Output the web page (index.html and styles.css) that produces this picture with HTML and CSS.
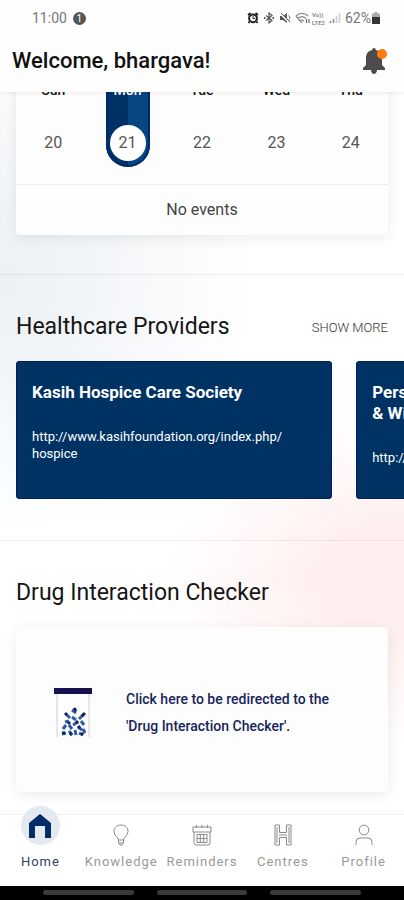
FILE: index.html
```html
<!DOCTYPE html>
<html lang="en">
<head>
<meta charset="utf-8">
<meta name="viewport" content="width=device-width, initial-scale=1">
<title>Home</title>
<link rel="stylesheet" href="styles.css">
</head>
<body>
<header class="top">
  <div class="status">
    <span class="clock">11:00</span>
    <span class="count">1</span>
    <div class="status-icons">
      <svg width="12" height="12" viewBox="0 0 12 12"><path d="M1 3 3.500 1M11 3 8.500 1M2.500 9.500 1.500 11M9.500 9.500l1 1.500" stroke="#222" stroke-width="1.800"/><circle cx="6" cy="6.300" r="3.900" fill="#fff" stroke="#222" stroke-width="2"/><path d="M6 4v2.500h2" fill="none" stroke="#222"/></svg>
      <svg width="12" height="12" viewBox="0 0 12 12" fill="none" stroke="#555" stroke-width="1.200"><path d="m3 3.500 6 5L6 11V1l3 2.500-6 5"/><path d="M1 6h1.500M9.500 6H11" stroke-width="2"/></svg>
      <svg width="12" height="12" viewBox="0 0 12 12"><path d="M1 4h3l4-3v10L4 8H1z" fill="#555"/><path d="m1 1 10 10" stroke="#fff" stroke-width="2"/><path d="m2 1 9 9M9.500 3.500c1.500 1 1.500 3 .5 4" fill="none" stroke="#555"/></svg>
      <svg width="16" height="12" viewBox="0 0 16 12" fill="none" stroke="#888" stroke-width="1.200"><path d="M1 4c3.500-3.500 8.500-3.500 12 0M3 6.500c2.500-2.300 5.500-2.300 8 0M5 9c1.300-1.200 2.700-1.200 4 0M1 4l6 7"/><path d="M11.500 7v4M14 11V7" stroke="#666"/></svg>
      <span class="volte"><span>Vo))</span><span>LTE2</span></span>
      <svg width="12" height="12" viewBox="0 0 12 12" stroke="#aaa" stroke-width="1.500"><path d="M1.500 9v2M4.500 7v4" stroke="#888"/><path d="M7.500 4v7M10.500 1v10" stroke="#ccc"/></svg>
      <span class="percent">62%</span>
      <svg width="8" height="12" viewBox="0 0 8 12"><path d="M2.500 0h3v1.500H8V12H0V1.500h2.500z" fill="#aaa"/><path d="M0 5h8v7H0z" fill="#333"/></svg>
    </div>
  </div>
  <div class="greeting">
    <h1>Welcome, bhargava!</h1>
    <button class="bell" aria-label="Notifications">
      <svg width="26" height="28" viewBox="0 0 26 28"><path d="M12 1c1.200 0 1.800.8 1.800 2 4.200.8 6.200 4 6.200 8v7l3 3v2H1v-2l3-3v-7c0-4 2-7.200 6.200-8 0-1.200.6-2 1.800-2z" fill="#4c4c4e"/><path d="M9 23h6c0 2.300-1.300 4-3 4s-3-1.700-3-4z" fill="#4c4c4e"/><circle cx="20" cy="7" r="5" fill="#ff7a0a"/></svg>
    </button>
  </div>
</header>

<main>
  <section class="events">
    <div class="calendar card">
      <div class="days">
        <button class="day"><b>Sun</b><span>20</span></button>
        <button class="day selected"><b>Mon</b><span>21</span></button>
        <button class="day"><b>Tue</b><span>22</span></button>
        <button class="day"><b>Wed</b><span>23</span></button>
        <button class="day"><b>Thu</b><span>24</span></button>
      </div>
      <p class="none">No events</p>
    </div>
  </section>

  <section class="block">
    <div class="block-head">
      <h2>Healthcare Providers</h2>
      <a class="more" href="#providers">SHOW MORE</a>
    </div>
    <div class="providers" id="providers">
      <article class="provider">
        <h3>Kasih Hospice Care Society</h3>
        <a href="#kasih">http://www.kasihfoundation.org/index.php/<br>hospice</a>
      </article>
      <article class="provider">
        <h3>Pers<br>&amp; Wi</h3>
        <a href="#pers">http://</a>
      </article>
    </div>
  </section>

  <section class="block">
    <div class="block-head"><h2>Drug Interaction Checker</h2></div>
    <a class="checker card" href="#checker">
      <svg width="38" height="50" viewBox="0 0 38 50">
        <path d="M3 6v43M35 6v43" stroke="#e6e6ea" stroke-width="2"/><path d="M4 6h30v43H4z" fill="#fff"/>
        <path d="M0 0h38v6H0z" fill="#17124d"/>
        <g stroke-width="3" fill="none">
          <path d="m18 22 4 3M12 26l4 4M30 26l-5 5M18 29l4 3M11 34l4-1M19 37l5-3M27 33l3 4M9 41l3-4M15 37l3 4M24 39l4 3M29 41l2 4M8 46l4-1M15 43l3 4M21 42l1 5M25 45l4 2" stroke="#2a5caa"/>
          <path d="m20 20 2 3M11 25l2 2M28 28l3-3M22 33l2 2M14 34l2 2M24 38l2 2M8 45h3M16 45l2 2M27 45l2 2" stroke="#15245c"/>
        </g>
      </svg>
      <span>Click here to be redirected to the<br>'Drug Interaction Checker'.</span>
    </a>
  </section>
</main>

<footer class="bottom">
  <nav>
    <a class="tab active" href="#home"><span class="icon">
      <svg width="22" height="24" viewBox="0 0 22 24"><path d="M11 0 22 9v15h-6V12H6v12H0V9z" fill="#052c66"/></svg></span>Home</a>
    <a class="tab" href="#knowledge"><span class="icon">
      <svg width="16" height="22" viewBox="0 0 16 22"><path d="M5.500 16c0-3-4.500-4-4.500-8.500C1 3.500 4 1 8 1s7 2.500 7 6.500c0 4.500-4.500 5.500-4.500 8.500zM5.500 16v3h5v-3M6 19.500 7 21h2l1-1.500"/></svg></span>Knowledge</a>
    <a class="tab" href="#reminders"><span class="icon">
      <svg width="22" height="22" viewBox="0 0 22 22"><path d="M2 3h18v5H2zM3 8v11q0 2 2 2h12q2 0 2-2V8M5.500 1v3M11 1v3M16.500 1v3M6 10.500h10v8H6zM6 14.500h10M9.300 10.500v8M12.600 10.500v8"/></svg></span>Reminders</a>
    <a class="tab" href="#centres"><span class="icon">
      <svg width="18" height="22" viewBox="0 0 18 22"><path d="M1 1h4.500v7.500h7V1H17v20h-4.500v-7.500h-7V21H1zM3 3v16M15 3v16M5 11h8"/></svg></span>Centres</a>
    <a class="tab" href="#profile"><span class="icon">
      <svg width="18" height="22" viewBox="0 0 18 22"><circle cx="9" cy="6" r="4.800"/><path d="M1 21v-3q0-4 4-4h8q4 0 4 4v3"/></svg></span>Profile</a>
  </nav>
  <div class="system"><i></i><i></i><i></i></div>
</footer>
</body>
</html>
```

FILE: styles.css
```css
* {
  box-sizing: border-box;
}

body {
  margin: 0;
  min-height: 100vh;
  display: flex;
  flex-direction: column;
  overflow-x: hidden;
  font-family: Roboto, "Liberation Sans", sans-serif;
  color: #151515;
  background:
    radial-gradient(ellipse 65% 260px at 0 280px, #ebf0f4, rgba(235, 240, 244, 0)),
    radial-gradient(ellipse 60% 170px at 100% 580px, #ffefee 30%, rgba(255, 239, 238, 0)),
    #fff;
}

h1, h2, h3, p {
  margin: 0;
}

button {
  border: 0;
  padding: 0;
  background: none;
  font: inherit;
  color: inherit;
}

a {
  color: inherit;
  text-decoration: none;
}

svg {
  display: block;
  flex: none;
}

/* Header */
.top {
  position: sticky;
  top: 0;
  z-index: 2;
  background: #fefefe;
  box-shadow: 0 1px 4px rgba(0, 0, 0, 0.08);
}

.status {
  height: 36px;
  padding: 0 24px 0 32px;
  display: flex;
  align-items: center;
  gap: 6px;
  color: #777;
  font-size: 14px;
}

.count {
  width: 13px;
  height: 13px;
  border-radius: 50%;
  background: #555;
  color: #fff;
  font-size: 10px;
  line-height: 13px;
  text-align: center;
}

.status-icons {
  margin-left: auto;
  display: flex;
  align-items: center;
  gap: 4px;
}

.status-icons svg:last-child {
  margin-left: -3px;
}

.volte {
  display: grid;
  gap: 1px;
  font-size: 6px;
  line-height: 7px;
  font-weight: 500;
  margin-left: -3px;
}

.greeting {
  height: 56px;
  padding: 0 16px 6px 12px;
  display: flex;
  align-items: center;
  justify-content: space-between;
}

h1 {
  font-size: 22px;
  font-weight: 500;
  line-height: 28px;
  color: #111;
}

/* Calendar */
.card {
  background: #fdfdfe;
  border-radius: 4px;
  box-shadow: 0 3px 14px rgba(0, 0, 0, 0.08);
}

.events {
  padding: 0 16px 39px;
  margin-top: -21px;
}

.days {
  display: grid;
  grid-template-columns: repeat(5, 1fr);
  justify-items: center;
  padding-bottom: 17px;
  border-bottom: 1px solid #ececee;
}

.day {
  width: 44px;
  padding: 9px 0 6px;
  display: flex;
  flex-direction: column;
  align-items: center;
  gap: 25px;
  border-radius: 0 0 22px 22px;
}

.day b {
  font-size: 14px;
  font-weight: 500;
  line-height: 20px;
}

.day span {
  width: 36px;
  height: 36px;
  border-radius: 50%;
  font-size: 16px;
  line-height: 36px;
  color: #555;
}

.selected {
  background: linear-gradient(90deg, #003166 50%, #084682 50%);
  box-shadow: inset 0 0 0 2px #00286c;
}

.selected b {
  color: #fff;
}

.selected span {
  background: #fff;
}

.none {
  padding: 15px 0;
  font-size: 16px;
  line-height: 20px;
  text-align: center;
  color: #444;
}

/* Sections */
.block {
  padding: 38px 16px 41px;
  border-top: 1px solid rgba(0, 0, 0, 0.06);
}

.block:last-child {
  padding-bottom: 22px;
}

.block-head {
  display: flex;
  align-items: center;
  justify-content: space-between;
  margin-bottom: 20px;
}

h2 {
  font-size: 23px;
  font-weight: 400;
  line-height: 28px;
}

.more {
  font-size: 13px;
  font-weight: 300;
  color: #333;
}

.providers {
  display: flex;
  gap: 24px;
  margin-right: -16px;
  padding-right: 16px;
  overflow: hidden;
}

.provider {
  flex: 0 0 85%;
  min-height: 138px;
  padding: 21px 16px;
  display: flex;
  flex-direction: column;
  gap: 25px;
  border-radius: 4px;
  box-shadow: inset 0 0 0 1px #00225a;
  background: #003263;
  color: #fff;
}

.provider h3 {
  font-size: 17px;
  font-weight: 700;
  line-height: 21px;
}

.provider a {
  font-size: 13px;
  line-height: 17px;
}

.checker {
  min-height: 165px;
  padding: 6px 38px 0;
  display: flex;
  align-items: center;
  gap: 34px;
  font-size: 14px;
  font-weight: 500;
  line-height: 27px;
  color: #17255a;
}

/* Bottom bar */
.bottom {
  position: sticky;
  bottom: 0;
  z-index: 2;
  margin-top: auto;
  background: #fff;
}

nav {
  display: grid;
  grid-template-columns: repeat(5, 1fr);
  height: 72px;
  border-top: 1px solid #f0f0f0;
}

.tab {
  display: flex;
  flex-direction: column;
  align-items: center;
  font-size: 13px;
  line-height: 16px;
  letter-spacing: 1px;
  color: #999;
}

.icon {
  height: 39px;
  display: grid;
  place-items: center;
}

.tab svg {
  fill: none;
  stroke: #8a8a8a;
}

.active {
  color: #33405f;
}

.active .icon {
  width: 39px;
  margin-top: -9px;
  margin-bottom: 9px;
  border-radius: 50%;
  background: #e3e8f1;
}

.active svg {
  stroke: none;
}

.system {
  height: 14px;
  padding: 4px 43px 0;
  display: grid;
  grid-template-columns: repeat(3, 1fr);
  gap: 23px;
  background: #000;
}

.system i {
  height: 5px;
  border-radius: 3px;
  background: #3a3a3a;
}
```
